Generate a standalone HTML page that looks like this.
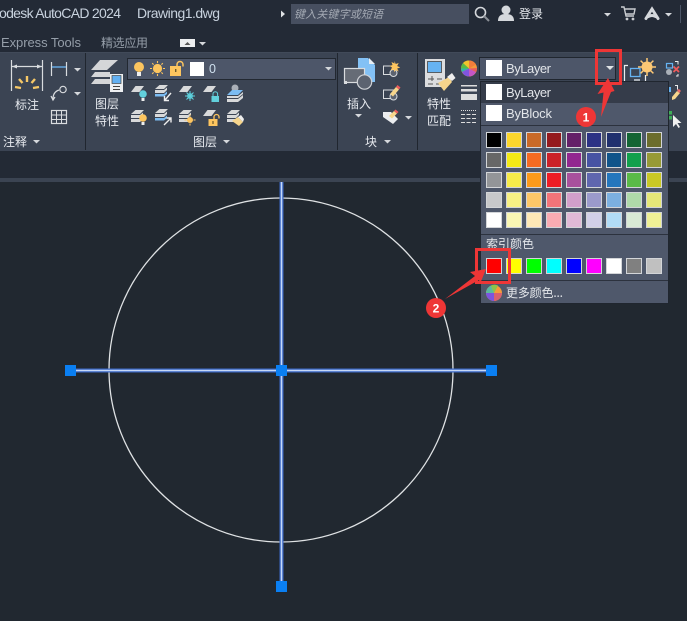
<!DOCTYPE html>
<html lang="zh"><head><meta charset="utf-8"><title>AutoCAD</title>
<style>
html,body{margin:0;padding:0;background:#212830;width:687px;height:621px;overflow:hidden}
svg{display:block}
text{font-family:"Liberation Sans","Noto Sans CJK SC",sans-serif;font-size:12px;fill:#e6e9ee}
.c{font-family:"Noto Sans CJK SC","WenQuanYi Zen Hei",sans-serif}
.t{font-size:14px;fill:#c8d2de}
.m{fill:#959ea9}
.s{fill:none;stroke:#d9dcdf;stroke-width:1.2}
</style></head><body>
<svg width="687" height="621" viewBox="0 0 687 621" xmlns="http://www.w3.org/2000/svg">
<defs>
<path id="tri" d="M0 0h7l-3.500 3.500z" fill="#d5d8dc"/>
<g id="bulbY"><circle cx="0" cy="0" r="3.800" fill="#fdc55f"/><rect x="-1.500" y="4" width="3" height="3" fill="#eee"/></g>
<g id="bulbC"><circle cx="0" cy="0" r="3.800" fill="#62d0dc"/><rect x="-1.500" y="4" width="3" height="3" fill="#eee"/></g>
<g id="lockO"><rect x="-4.500" y="-1" width="9" height="7" fill="#fdc55f"/><path d="M1-1v-2a2.500 2.500 0 0 1 5 0v1.500" fill="none" stroke="#fdc55f" stroke-width="1.300"/><rect x="-.6" y="1" width="1.200" height="3" fill="#6d5a2a"/></g>
<path id="sheet" d="M4.500 0h8.500l-4.500 6H0z" fill="#d8d9da"/>
<g id="stack"><path d="M4.500 0h8.500l-4 4H0zM0 5h9l3-2.500V5L9 8H0zM0 9h9l3-2.500V9l-3 3H0z" fill="#d8d9da"/></g>
<g id="stackB"><path d="M4.500 0h8.500l-4 4H0zM0 5h9l3-2.500V5L9 8H0z" fill="#d8d9da"/><path d="M0 9h9l3-2.500V9l-3 2.500H0z" fill="#7cbcf2"/></g>
</defs>

<!-- backgrounds -->
<rect width="687" height="621" fill="#212830"/>
<rect width="687" height="52" fill="#232a36"/>
<rect y="52" width="687" height="99" fill="#3b4453"/>
<rect y="151" width="687" height="27" fill="#232a35"/>
<rect y="178" width="687" height="4" fill="#3b4452"/>
<rect y="52" width="687" height="1" fill="#414a59"/>

<!-- title bar -->
<text x="-1" y="18" class="t" textLength="122">odesk AutoCAD 2024</text>
<text x="137" y="18" class="t" textLength="83">Drawing1.dwg</text>
<path d="M281 10.500l4 3.500-4 3.500z" fill="#dfe2e6"/>
<rect x="291" y="4" width="178" height="20" fill="#474f60"/>
<text x="294" y="18" class="c" style="font-size:11px;fill:#a3a9b3;font-style:italic" textLength="89">键入关键字或短语</text>
<circle cx="480.500" cy="12.500" r="5" fill="none" stroke="#d5d8dc" stroke-width="1.600"/><path d="M484 16l5 5" stroke="#8a8f96" stroke-width="2"/>
<circle cx="506" cy="10" r="4.500" fill="#d5d8dc"/><path d="M498 21c0-6 4-7 8-7s8 1 8 7z" fill="#d5d8dc"/>
<text x="519" y="18" class="c" style="font-size:12px" textLength="24">登录</text>
<use href="#tri" x="604" y="13"/>
<path d="M621 7h3l2 9h8M625 9h10l-1 5h-8" fill="none" stroke="#c9ccd0" stroke-width="1.400"/><circle cx="627" cy="19" r="1.400" fill="#c9ccd0"/><circle cx="633" cy="19" r="1.400" fill="#c9ccd0"/>
<path d="M646 18.500L652 9l6 9.500M648.500 16.500Q652 14.500 655.500 16.500" fill="none" stroke="#d5d8dc" stroke-width="3" stroke-linecap="round"/>
<use href="#tri" x="665" y="13"/>
<rect x="680" y="5" width="1" height="18" fill="#4c5667"/>

<!-- tabs -->
<text x="1" y="47" class="m" style="font-size:13px" textLength="80">Express Tools</text>
<text x="101" y="47" class="m c" style="font-size:12px" textLength="47">精选应用</text>
<rect x="180" y="39" width="15" height="8" fill="#eceef0"/><path d="M184.500 45l3-3 3 3z" fill="#555"/>
<use href="#tri" x="199" y="42"/>

<!-- dividers -->
<rect x="85" y="53" width="1" height="97" fill="#20262f"/>
<rect x="337" y="53" width="1" height="97" fill="#20262f"/>
<rect x="417" y="53" width="1" height="97" fill="#20262f"/>

<!-- annotation panel -->
<path d="M11.500 60v31M42.500 60v31M12 66.500h30" class="s"/>
<path d="M12 66.500l5-2v4zM42 66.500l-5-2v4z" fill="#d9dcdf"/>
<path d="M27 76v6M19 79l3.500 4M35 79l-3.500 4M15 87l6 1M39 87l-6 1" stroke="#f6c867" stroke-width="2.400"/>
<text x="15" y="109" class="c" textLength="24">标注</text>
<path d="M51.500 62v14M66.500 62v14" class="s"/><path d="M52 67h14" stroke="#6cb6f4" stroke-width="1.300"/>
<use href="#tri" x="74" y="68"/>
<circle cx="63" cy="89.500" r="3.200" fill="none" stroke="#d9dcdf" stroke-width="1.200"/><path d="M59 90c-3 1-6 3-6 9M51 96l2 4 2-3" class="s"/>
<use href="#tri" x="74" y="92"/>
<rect x="51.500" y="110.500" width="15" height="13" class="s"/><path d="M51.500 115h15M51.500 119.500h15M56.500 110.500v13M61.500 110.500v13" class="s" style="stroke-width:1"/>
<text x="3" y="146" class="c" textLength="24">注释</text>
<use href="#tri" x="33" y="140"/>

<!-- layer panel -->
<path d="M100 60h18l-11 10H91z" fill="#d5d6d8"/><path d="M95 72h15v5H91z" fill="#d5d6d8"/><path d="M95 79h15v5H91z" fill="#d5d6d8"/>
<rect x="110" y="74" width="13" height="18" fill="#eef0f2"/><rect x="112" y="75.500" width="9" height="8" fill="#62b0f2" stroke="#444" stroke-width=".7"/><path d="M113 86.500h7M113 89.500h7" stroke="#444"/>
<text x="95" y="108" class="c" textLength="24">图层</text>
<text x="95" y="125" class="c" textLength="24">特性</text>
<rect x="127.500" y="58.500" width="208" height="21" fill="#4d5669" stroke="#222831"/>
<circle cx="139" cy="67" r="5" fill="#fdc55f"/><rect x="137" y="72" width="4" height="4" fill="#eee"/>
<circle cx="157.500" cy="68.500" r="4.600" fill="#fdc55f"/><path d="M157.500 61v2M157.500 74v2M150 68.500h2M163 68.500h2M152.200 63.200l1.400 1.400M161.400 72.400l1.400 1.400M152.200 73.800l1.400-1.400M161.400 64.600l1.400-1.400" stroke="#fdc55f" stroke-width="1.100"/>
<rect x="170" y="66" width="11" height="10" fill="#fdc55f"/><path d="M177 66v-1.500a3 3 0 0 1 6 0v2" fill="none" stroke="#fdc55f" stroke-width="1.500"/><rect x="175" y="69" width="1.400" height="3" fill="#6d5a2a"/>
<rect x="190" y="62" width="14" height="14" fill="#fff"/>
<text x="209" y="73" style="font-size:12.500px;fill:#cfe0ee">0</text>
<use href="#tri" x="325" y="67"/>
<!-- layer icons row 1 -->
<use href="#sheet" x="131" y="86"/><use href="#bulbC" x="143" y="94"/>
<use href="#stackB" x="155" y="85"/><path d="M171 93l-6 7M164.500 96v4.500h4.500" stroke="#eee" stroke-width="1.400" fill="none"/>
<use href="#sheet" x="179" y="86"/><circle cx="190" cy="96" r="3" fill="#49b9c6"/><path d="M185 96h10M190 91v10M186.500 92.500l7 7M193.500 92.500l-7 7" stroke="#62d0dc"/>
<use href="#sheet" x="203" y="86"/><rect x="211.500" y="96" width="7.500" height="6" fill="#62d0dc"/><path d="M213 96v-2a2.300 2.300 0 0 1 4.600 0v2" fill="none" stroke="#62d0dc"/>
<circle cx="235" cy="88" r="3.500" fill="#aab0b8"/><path d="M232 90h11l-5 5h-11z" fill="#7cbcf2"/><path d="M227 96h11l5-4v2l-5 4h-11zM227 99h11l5-4v3l-5 4h-11z" fill="#d8d9da"/>
<!-- row 2 -->
<use href="#stack" x="131" y="110"/><use href="#bulbY" x="143" y="118"/>
<use href="#stackB" x="155" y="109"/><path d="M164 125l7-7M166.500 118h4.500v4.500" stroke="#eee" stroke-width="1.400" fill="none"/>
<use href="#stack" x="179" y="110"/><circle cx="190" cy="120" r="3" fill="#fdc55f"/><path d="M190 114.500v2M190 123.500v2M184.500 120h2M193.500 120h2" stroke="#fdc55f"/>
<use href="#sheet" x="203" y="110"/><use href="#lockO" x="213" y="120"/>
<use href="#stack" x="227" y="110"/><path d="M232 121l6-4 5 5-4 4z" fill="#f6d58c"/><path d="M238 117l3-2 3 4-1 3z" fill="#eee"/>
<text x="193" y="146" class="c" textLength="24">图层</text>
<use href="#tri" x="223" y="140"/>

<!-- block panel -->
<path d="M358 58h10l7 7v17h-17z" fill="#83c1f5"/><path d="M369 58l6 6h-6z" fill="#e8eef3"/>
<rect x="344.500" y="68.500" width="20" height="14" fill="#666c76" stroke="#d9dcdf" stroke-width="1.200"/>
<rect x="344" y="81" width="3" height="3" fill="#d9dcdf"/>
<circle cx="364.500" cy="82" r="7.200" fill="#5c6370" stroke="#d0d3d7" stroke-width="1.200"/>
<text x="347" y="108" class="c" textLength="24">插入</text>
<use href="#tri" x="355" y="114"/>
<rect x="383.500" y="66" width="11" height="8.500" fill="none" stroke="#d9dcdf"/><circle cx="393.500" cy="73" r="3.500" fill="#5c6370" stroke="#d9dcdf"/><path d="M394.500 61l1.200 3 3-1-1.500 3 3 1.500-3 1 1.500 3-3-1.500-1.200 2-1-2.500-3 1 1.500-3-2.500-1.500 3-1-1-3 3 1.500z" fill="#fdc55f"/>
<rect x="383.500" y="90" width="11" height="8.500" fill="none" stroke="#d9dcdf"/><circle cx="393.500" cy="96.500" r="3.500" fill="#5c6370" stroke="#d9dcdf"/><path d="M390 94l6-7 3 2.500-6 7z" fill="#f6d58c"/><path d="M396 87l1.500-2 3 2.500-1.500 2z" fill="#ee5b5b"/>
<path d="M383 112h8l7 7-5 5-10-7z" fill="#eceef0"/><path d="M389 116l5-5 3 2.500-5 5z" fill="#f6d58c"/><path d="M394 111l1.500-1.500 3 2.500-1.500 1.500z" fill="#ee5b5b"/>
<use href="#tri" x="405" y="116"/>
<text x="365" y="146" class="c" textLength="12">块</text>
<use href="#tri" x="384" y="140"/>

<!-- properties panel -->
<rect x="425" y="59" width="20" height="28" fill="#dcdddf"/><rect x="427.500" y="61.500" width="14" height="11" fill="#66b3f2" stroke="#444" stroke-width=".8"/>
<path d="M428 79h6M437 79h5M432 76v5M428 84h5M436 84h6" stroke="#555" stroke-width="1"/>
<path d="M438 83l11-6 3 5-8 9z" fill="#f6d58c"/><path d="M447 77l5-4 3.500 5-3.500 3z" fill="#eee"/>
<text x="427" y="108" class="c" textLength="24">特性</text>
<text x="427" y="125" class="c" textLength="24">匹配</text>
<circle cx="469" cy="68.500" r="8" fill="#f59a3a"/>
<path d="M469 68.500L463 63a8 8 0 0 1 6-2.500z" fill="#f0c22c"/><path d="M469 68.500V60.500a8 8 0 0 1 7 4z" fill="#f27d3a"/><path d="M469 68.500L461 68.500a8 8 0 0 1 2-5.500z" fill="#59b947"/><path d="M469 68.500L462 72a8 8 0 0 1-1-3.500z" fill="#2fb6a9"/><path d="M469 68.500L469 76.500a8 8 0 0 1-7-4.500z" fill="#8055e0"/><path d="M469 68.500L476 72a8 8 0 0 1-7 4.500z" fill="#c556c6"/><path d="M469 68.500L477 68a8 8 0 0 1-1 4z" fill="#e85d5d"/>
<rect x="461" y="85" width="16" height="1.500" fill="#ddd"/><rect x="461" y="89" width="16" height="2.500" fill="#ddd"/><rect x="461" y="94" width="16" height="6" fill="#ddd"/>
<path d="M461 110.500h16" stroke="#ddd" stroke-dasharray="1 1"/><path d="M461 114.500h16M461 118.500h16M461 122.500h16" stroke="#ddd" stroke-dasharray="4 1.500"/>

<!-- right panel -->
<path d="M628 65.500h-3.500V81M645.500 75v6" fill="none" stroke="#eceef0" stroke-width="1.200"/>
<rect x="630.500" y="68.500" width="9.500" height="8" fill="none" stroke="#66b3f2" stroke-width="1.300"/>
<rect x="634" y="79" width="6" height="2" fill="#aab0b8"/>
<circle cx="647" cy="67" r="5.500" fill="#fdc875"/><path d="M647 58v18M638 67h18M640.600 60.600l12.800 12.800M653.400 60.600l-12.800 12.800" stroke="#fdc875" stroke-width="1.500"/>
<rect x="666.500" y="63.500" width="6" height="4.500" fill="none" stroke="#66b3f2" stroke-width="1.200"/><circle cx="669" cy="72" r="3" fill="#aab0b8"/><path d="M673.500 66.500l5.500 5.500M679 66.500l-5.500 5.500" stroke="#ee5b5b" stroke-width="1.800"/><path d="M675 61.500h3v3M678 74v2h-2" fill="none" stroke="#eee"/>
<rect x="669" y="87" width="2" height="5" fill="#66b3f2"/><path d="M672 97l5-6 3 2-5 6-3 1z" fill="#f6d58c"/><path d="M677 90l2-1 2 2-2 2z" fill="#ee6b6b"/><path d="M675 85.500h2.500v4" fill="none" stroke="#eee"/>
<path d="M673 115v12l3-3 2.500 4 1.500-1-2.500-4h4z" fill="#f0f0f0"/><rect x="669" y="111" width="3" height="3.500" fill="#3fae57"/><rect x="669" y="116" width="3" height="3.500" fill="#3fae57"/>

<!-- color combo -->
<rect x="479.500" y="57.500" width="136" height="22" fill="#4d5669" stroke="#20262f"/>
<rect x="486" y="60" width="16" height="16" fill="#fff"/>
<text x="506" y="73" style="font-size:13px;fill:#e3e6ea" textLength="45">ByLayer</text>
<path d="M606 66h8l-4 4z" fill="#e0e3e6"/>

<!-- drop panel -->
<rect x="480.500" y="81.500" width="188" height="222" fill="#4f586b" stroke="#20262f"/>
<rect x="481" y="82" width="187" height="21" fill="#353c4a"/>
<rect x="486" y="84" width="16" height="16" fill="#fff"/>
<text x="506" y="97" style="font-size:13px;fill:#e3e6ea" textLength="45">ByLayer</text>
<rect x="486" y="105" width="16" height="16" fill="#fff"/>
<text x="506" y="118" style="font-size:13px;fill:#e3e6ea" textLength="46">ByBlock</text>
<rect x="481" y="125" width="187" height="1" fill="#2c323e"/>
<g stroke="#d3d5d8" stroke-width="1">
<rect x="486.500" y="132.500" width="15" height="15" fill="#000000"/><rect x="506.500" y="132.500" width="15" height="15" fill="#fcd62b"/><rect x="526.500" y="132.500" width="15" height="15" fill="#c96a28"/><rect x="546.500" y="132.500" width="15" height="15" fill="#951a1d"/><rect x="566.500" y="132.500" width="15" height="15" fill="#642068"/><rect x="586.500" y="132.500" width="15" height="15" fill="#2c3285"/><rect x="606.500" y="132.500" width="15" height="15" fill="#20306e"/><rect x="626.500" y="132.500" width="15" height="15" fill="#136533"/><rect x="646.500" y="132.500" width="15" height="15" fill="#6c6d2c"/>
<rect x="486.500" y="152.500" width="15" height="15" fill="#676767"/><rect x="506.500" y="152.500" width="15" height="15" fill="#f4ea16"/><rect x="526.500" y="152.500" width="15" height="15" fill="#f56b22"/><rect x="546.500" y="152.500" width="15" height="15" fill="#cb2128"/><rect x="566.500" y="152.500" width="15" height="15" fill="#92278f"/><rect x="586.500" y="152.500" width="15" height="15" fill="#4753a3"/><rect x="606.500" y="152.500" width="15" height="15" fill="#10548a"/><rect x="626.500" y="152.500" width="15" height="15" fill="#12a04c"/><rect x="646.500" y="152.500" width="15" height="15" fill="#979a36"/>
<rect x="486.500" y="172.500" width="15" height="15" fill="#939598"/><rect x="506.500" y="172.500" width="15" height="15" fill="#f6eb4a"/><rect x="526.500" y="172.500" width="15" height="15" fill="#fb9a1b"/><rect x="546.500" y="172.500" width="15" height="15" fill="#ed1c24"/><rect x="566.500" y="172.500" width="15" height="15" fill="#a8519c"/><rect x="586.500" y="172.500" width="15" height="15" fill="#5f66ae"/><rect x="606.500" y="172.500" width="15" height="15" fill="#2476bc"/><rect x="626.500" y="172.500" width="15" height="15" fill="#5aba47"/><rect x="646.500" y="172.500" width="15" height="15" fill="#cac826"/>
<rect x="486.500" y="192.500" width="15" height="15" fill="#c7c8ca"/><rect x="506.500" y="192.500" width="15" height="15" fill="#f7f084"/><rect x="526.500" y="192.500" width="15" height="15" fill="#fdc768"/><rect x="546.500" y="192.500" width="15" height="15" fill="#f37479"/><rect x="566.500" y="192.500" width="15" height="15" fill="#d19fca"/><rect x="586.500" y="192.500" width="15" height="15" fill="#9b9acb"/><rect x="606.500" y="192.500" width="15" height="15" fill="#7cb0e0"/><rect x="626.500" y="192.500" width="15" height="15" fill="#afd9a9"/><rect x="646.500" y="192.500" width="15" height="15" fill="#e6e778"/>
<rect x="486.500" y="212.500" width="15" height="15" fill="#ffffff"/><rect x="506.500" y="212.500" width="15" height="15" fill="#f9f6b3"/><rect x="526.500" y="212.500" width="15" height="15" fill="#fee8b6"/><rect x="546.500" y="212.500" width="15" height="15" fill="#f9abb2"/><rect x="566.500" y="212.500" width="15" height="15" fill="#e0b9d6"/><rect x="586.500" y="212.500" width="15" height="15" fill="#d2d0e8"/><rect x="606.500" y="212.500" width="15" height="15" fill="#b1dcf6"/><rect x="626.500" y="212.500" width="15" height="15" fill="#d9ead5"/><rect x="646.500" y="212.500" width="15" height="15" fill="#eff095"/>
<rect x="486.500" y="258.500" width="15" height="15" fill="#ff0000"/><rect x="506.500" y="258.500" width="15" height="15" fill="#ffff00"/><rect x="526.500" y="258.500" width="15" height="15" fill="#00ff00"/><rect x="546.500" y="258.500" width="15" height="15" fill="#00ffff"/><rect x="566.500" y="258.500" width="15" height="15" fill="#0000ff"/><rect x="586.500" y="258.500" width="15" height="15" fill="#ff00ff"/><rect x="606.500" y="258.500" width="15" height="15" fill="#ffffff"/><rect x="626.500" y="258.500" width="15" height="15" fill="#808080"/><rect x="646.500" y="258.500" width="15" height="15" fill="#c0c0c0"/>
</g>
<rect x="481" y="234" width="187" height="1" fill="#2c323e"/>
<text x="486" y="248" class="c" style="fill:#e3e6ea" textLength="48">索引颜色</text>
<rect x="481" y="280" width="187" height="1" fill="#2c323e"/>
<circle cx="494" cy="293" r="8" fill="#f59a3a"/><path d="M494 293L486 293a8 8 0 0 1 5-7.500L494 293z" fill="#59b9a0"/><path d="M494 293L491 285.500a8 8 0 0 1 7-0z" fill="#8bc34a"/><path d="M494 293L502 293a8 8 0 0 1-8 8z" fill="#d9606e"/><path d="M494 293V301a8 8 0 0 1-8-8z" fill="#7b55e0"/>
<text x="506" y="297" class="c" style="fill:#e3e6ea" textLength="57">更多颜色...</text>

<!-- drawing -->
<circle cx="281" cy="370" r="172" fill="none" stroke="#dfe2e4" stroke-width="1.300"/>
<path d="M71 370.500H491M281.500 182V586" stroke="#3a68c6" stroke-width="4"/>
<path d="M71 370.500H491M281.500 182V586" stroke="#c6d8f6" stroke-width="1.500"/>
<rect x="65" y="365" width="11" height="11" fill="#0a7ff2"/>
<rect x="486" y="365" width="11" height="11" fill="#0a7ff2"/>
<rect x="276" y="365" width="11" height="11" fill="#0a7ff2"/>
<rect x="276" y="581" width="11" height="11" fill="#0a7ff2"/>

<!-- annotations -->
<rect x="596.500" y="50.500" width="24" height="33" fill="none" stroke="#ee3636" stroke-width="3"/>
<path d="M608 78L597.500 94l6-1.500L601 117l10-25 3.500-1z" fill="#ee3636"/>
<circle cx="586" cy="117" r="10" fill="#ee3636"/>
<text x="586" y="121.500" text-anchor="middle" style="font-size:12px;font-weight:700;fill:#fff">1</text>
<rect x="476.500" y="249.500" width="33" height="33" fill="none" stroke="#ee3636" stroke-width="3"/>
<path d="M486 269L470 272l5 4-30 23 34-19 1 4z" fill="#ee3636"/>
<circle cx="436" cy="308" r="10" fill="#ee3636"/>
<text x="436" y="312.500" text-anchor="middle" style="font-size:12px;font-weight:700;fill:#fff">2</text>
</svg>
</body></html>
